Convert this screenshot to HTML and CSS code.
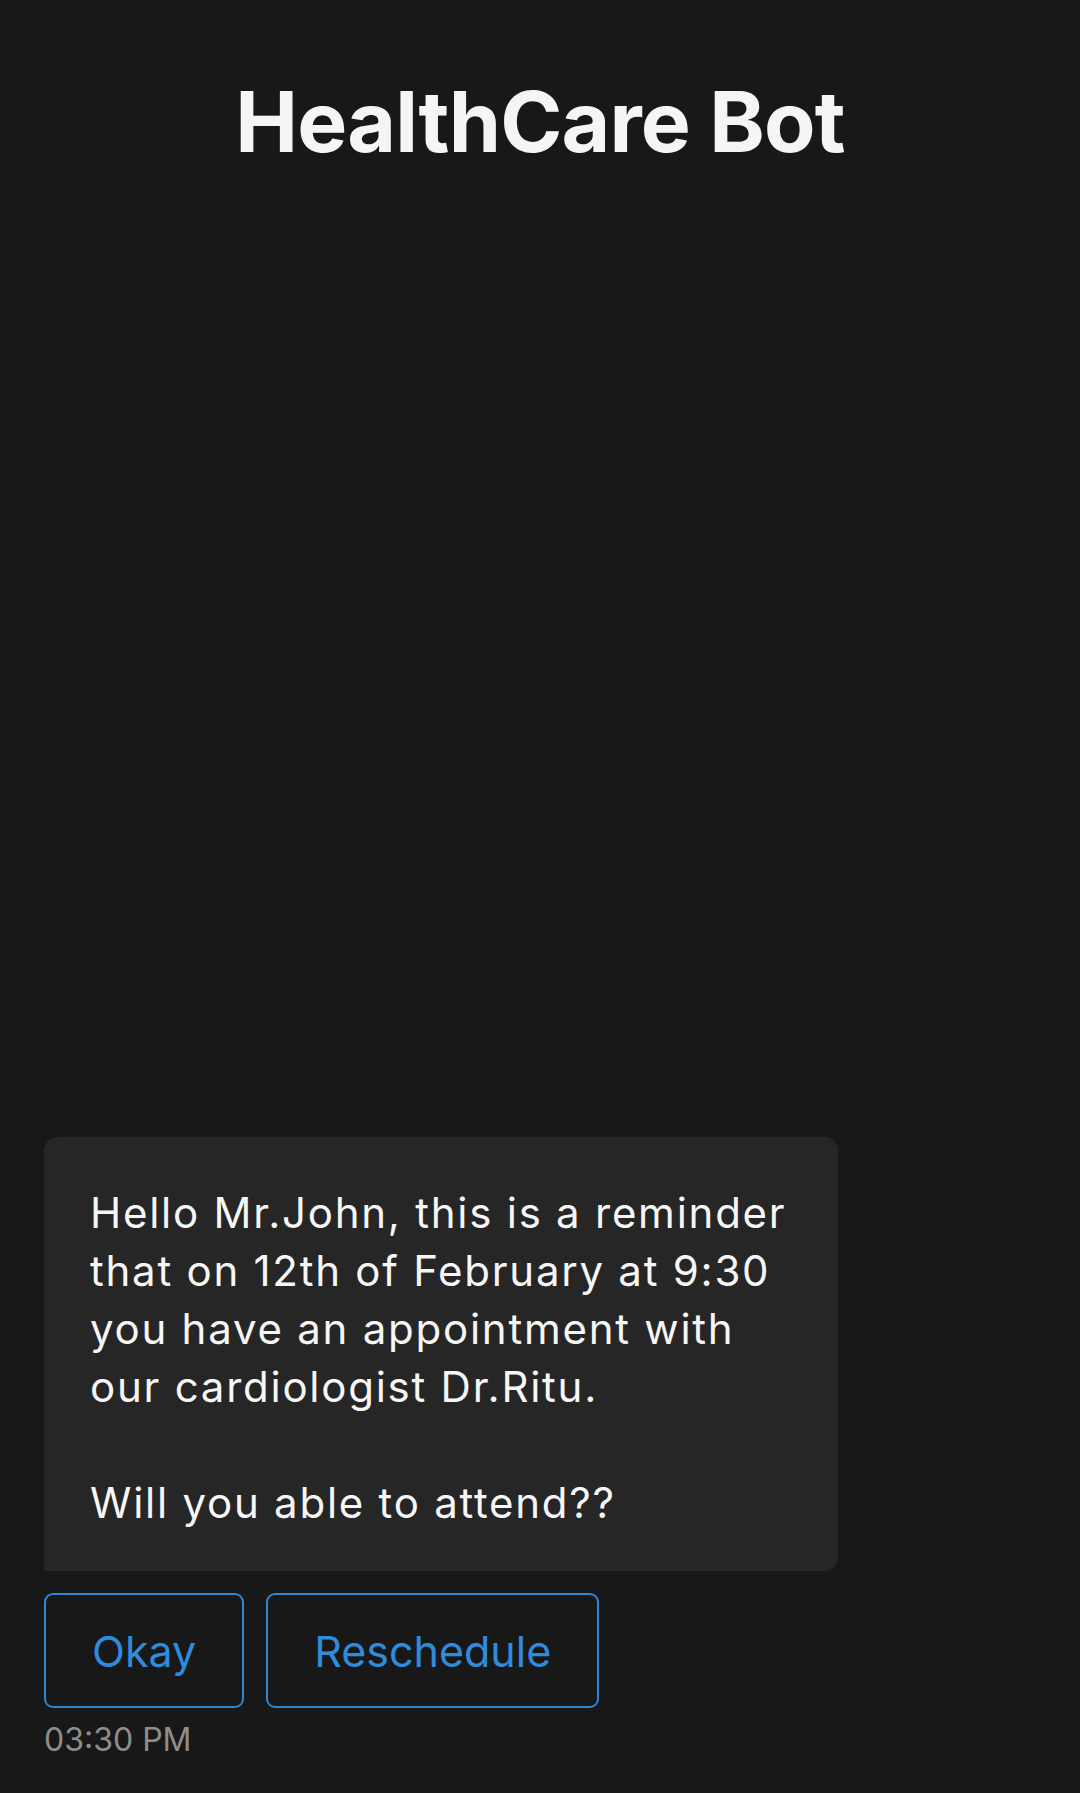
FILE: index.html
```html
<!DOCTYPE html>
<html lang="en">
<head>
<meta charset="utf-8">
<title>HealthCare Bot</title>
<link rel="stylesheet" href="styles.css">
</head>
<body>
<div class="app">
  <header class="header">
    <h1 class="title">HealthCare Bot</h1>
  </header>
  <main class="chat">
    <div class="bubble">
      <p class="msg">Hello Mr.John, this is a reminder that on 12th of February at 9:30 you have an appointment with our cardiologist Dr.Ritu.</p>
      <p class="msg msg-gap">Will you able to attend??</p>
    </div>
    <div class="actions">
      <button class="btn" type="button">Okay</button>
      <button class="btn" type="button">Reschedule</button>
    </div>
    <div class="time">03:30 PM</div>
  </main>
</div>
</body>
</html>
```

FILE: styles.css
```css
* { box-sizing: border-box; }
html, body {
  margin: 0;
  padding: 0;
  background: #181818;
}
body {
  font-family: Inter, "Noto Sans", "Liberation Sans", sans-serif;
  color: #f4f4f4;
}
.app {
  height: 1793px;
  display: flex;
  flex-direction: column;
}
.header {
  display: flex;
  justify-content: center;
  padding-top: 80px;
}
.title {
  margin: 0;
  font-size: 84px;
  line-height: 1;
  font-weight: 700;
  letter-spacing: -0.8px;
  color: #f5f5f5;
}
.chat {
  flex: 1;
  display: flex;
  flex-direction: column;
  justify-content: flex-end;
  align-items: flex-start;
  padding: 0 44px 34px;
}
.bubble {
  width: 794px;
  background: #262626;
  border-radius: 14px 14px 14px 0;
  padding: 47px 38px 39px 46px;
}
.msg {
  margin: 0;
  font-size: 42px;
  line-height: 58px;
  letter-spacing: 1.75px;
  color: #f6f6f6;
}
.msg-gap {
  margin-top: 58px;
}
.actions {
  display: flex;
  gap: 22px;
  margin-top: 22px;
}
.btn {
  height: 115px;
  padding: 0 46px;
  background: transparent;
  border: 2px solid #3285d2;
  border-radius: 9px;
  color: #2f8bdb;
  font-family: Inter, "Noto Sans", "Liberation Sans", sans-serif;
  font-size: 43px;
  display: flex;
  align-items: center;
}
.time {
  margin-top: 12px;
  font-size: 32px;
  color: #8e8e8e;
}
```
